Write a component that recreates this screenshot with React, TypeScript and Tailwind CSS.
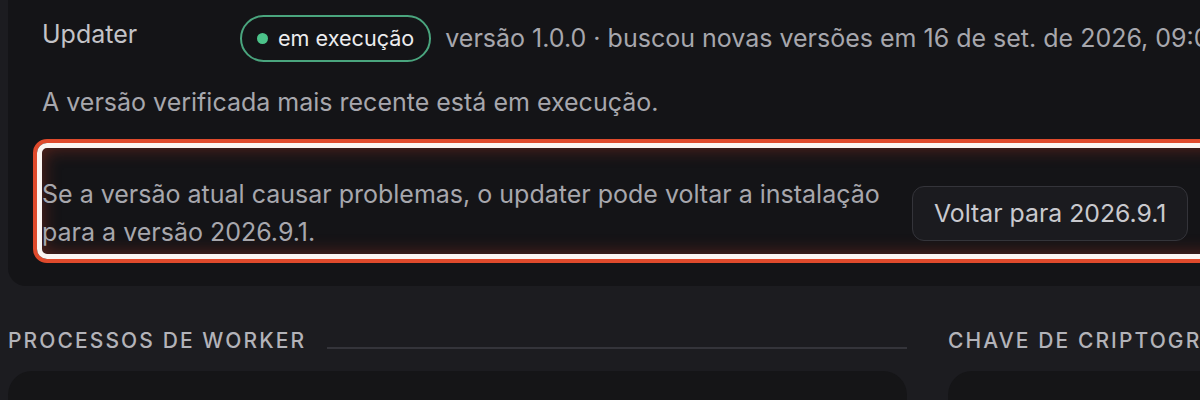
import React from 'react';

export default function App() {
  return (
    <div
      className="h-[400px] w-[1200px] overflow-hidden bg-[#1c1c20] px-2"
      style={{ fontFamily: 'Inter, "Noto Sans", sans-serif' }}
    >
      {/* Updater card */}
      <div className="w-[1300px] rounded-b-[18px] bg-[#141417] pb-[23px] pl-[34px] pr-[40px] pt-[15px]">
        <div className="flex items-start">
          <div className="w-[198px] text-[25px] leading-[38px] text-[#c3c3c8]">Updater</div>
          <div className="flex items-center">
            <span className="flex h-[47px] items-center gap-[10px] rounded-full border-2 border-[#4aa57e] px-[15px] text-[21.6px] text-[#ececee]">
              <span className="h-[11px] w-[11px] rounded-full bg-[#4cc38a]" />
              em execução
            </span>
            <span className="ml-[14px] whitespace-nowrap text-[25px] text-[#a7a7ad]">
              versão 1.0.0 · buscou novas versões em 16 de set. de 2026, 09:00
            </span>
          </div>
        </div>

        <p className="mt-[25px] text-[25px] leading-[30px] text-[#a7a7ad]">
          A versão verificada mais recente está em execução.
        </p>

        {/* highlighted rollback row */}
        <div className="-ml-[9px] mt-[22px] rounded-[14px] border-4 border-[#df4a2c]">
          <div className="rounded-[10px] border-[5px] border-[#fbf5f2] bg-[#141417] shadow-[inset_0_0_18px_rgba(200,60,35,0.42)]">
            <div className="flex items-center gap-[20px] pb-[3px] pt-[27px]">
              <p className="w-[850px] text-[25px] leading-[38px] text-[#a7a7ad]">
                Se a versão atual causar problemas, o updater pode voltar a instalação para a versão 2026.9.1.
              </p>
              <button className="shrink-0 rounded-[12px] border border-[#34343a] bg-[#1b1b1f] px-[21px] py-[11px] text-[24.8px] leading-[31px] text-[#c9c9ce]">
                Voltar para 2026.9.1
              </button>
            </div>
          </div>
        </div>
      </div>

      {/* Lower sections */}
      <div className="mt-[41px] grid w-[1900px] grid-cols-[899px_899px] gap-x-[41px]">
        {['Processos de worker', 'Chave de criptografia'].map((t) => (
          <div key={t}>
            <div className="flex items-center gap-[21px]">
              <h3 className="whitespace-nowrap text-[21px] font-medium uppercase leading-[28px] tracking-[0.1em] text-[#b3b3b9]">
                {t}
              </h3>
              <div className="mt-[14px] h-[2px] flex-1 bg-[#34343a]" />
            </div>
            <div className="mt-[16px] h-[120px] rounded-[24px] bg-[#151517]" />
          </div>
        ))}
      </div>
    </div>
  );
}
